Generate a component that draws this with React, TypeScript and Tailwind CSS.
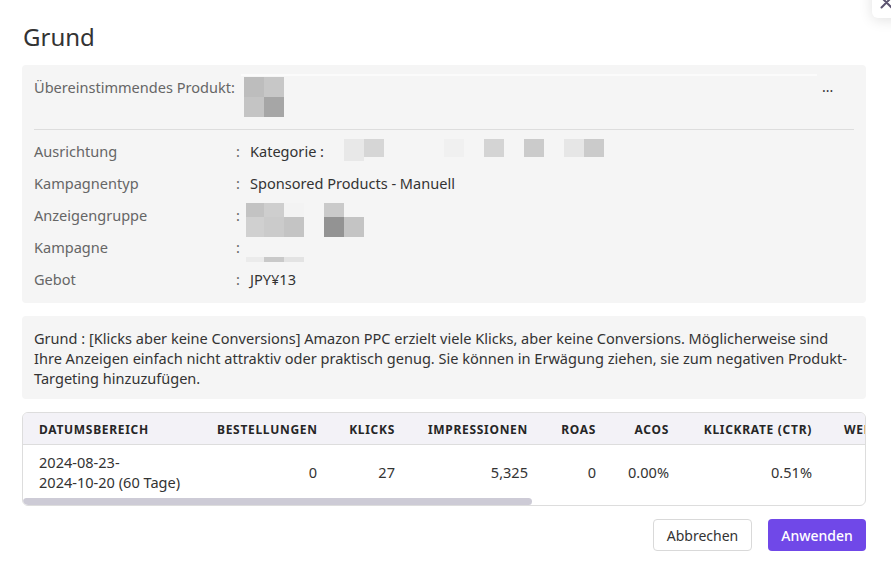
import React from "react";

const cols = [
  { label: "Datumsbereich", w: "w-[178px]", align: "text-left" },
  { label: "Bestellungen", w: "w-[132px]", align: "text-right" },
  { label: "Klicks", w: "w-[78px]", align: "text-right" },
  { label: "Impressionen", w: "w-[133px]", align: "text-right" },
  { label: "ROAS", w: "w-[68px]", align: "text-right" },
  { label: "ACOS", w: "w-[73px]", align: "text-right" },
  { label: "Klickrate (CTR)", w: "w-[143px]", align: "text-right" },
  { label: "Werbeausgaben", w: "w-[150px]", align: "text-left" },
  { label: "Umsatz", w: "w-[120px]", align: "text-right" },
];

function Px({ c, w = "w-[20px]", h = "h-[20px]" }: { c: string; w?: string; h?: string }) {
  return <div className={`${w} ${h} ${c} shrink-0`} />;
}

export default function App() {
  return (
    <div className="relative w-[891px] h-[578px] overflow-hidden bg-white pl-[22px] pr-[25px] pt-[21px] font-['Noto_Sans','Noto_Sans_CJK_SC',sans-serif]">
      {/* close button */}
      <div className="absolute left-[872px] top-[-22px] w-[40px] h-[40px] rounded-[6px] bg-white shadow-[0_2px_14px_rgba(0,0,0,0.12)]">
        <svg className="absolute left-[8px] top-[18px]" width="13" height="13" viewBox="0 0 13 13">
          <path d="M1.5 1.5 L11.5 11.5 M11.5 1.5 L1.5 11.5" stroke="#5c5470" strokeWidth="2" strokeLinecap="round" />
        </svg>
      </div>

      <h1 className="ml-[1px] mb-[12px] text-[24px] leading-[32px] text-[#333]">Grund</h1>

      {/* info box */}
      <div className="rounded-[4px] bg-[#f5f5f5] px-[12px] pt-[9px] pb-[8px] text-[14.55px] leading-[20px]">
        <div className="flex items-start">
          <div className="w-[207px] mt-[3px] text-[#666] whitespace-nowrap">Übereinstimmendes Produkt:</div>
          <div className="w-[581px] flex flex-col">
            <div className="h-[2px] w-[576px] bg-[#fbfbfb]" />
            <div className="ml-[3px] mt-[1px] flex flex-col">
              <div className="flex">
                <Px c="bg-[#bdbdbd]" />
                <Px c="bg-[#c7c7c7]" />
              </div>
              <div className="flex">
                <Px c="bg-[#c4c4c4]" />
                <Px c="bg-[#a6a6a6]" />
              </div>
            </div>
          </div>
          <div className="mt-[3px] text-[14px] text-[#333]">...</div>
        </div>
        <div className="mt-[12px] h-px bg-[#dddddd]" />
        <div className="mt-[5px]">
          <div className="flex h-[32px] items-center">
            <div className="w-[202px] text-[#666]">Ausrichtung</div>
            <div className="w-[14px] text-[#666]">:</div>
            <div className="w-[94px] text-[#333] whitespace-nowrap">Kategorie :</div>
            <div className="flex items-start mt-[-2px] h-[22px]">
              <Px c="bg-[#e8e8e8]" h="h-[22px]" />
              <Px c="bg-[#d6d6d6]" h="h-[18px]" />
              <div className="w-[60px]" />
              <Px c="bg-[#f0f0f0]" h="h-[18px]" />
              <div className="w-[20px]" />
              <Px c="bg-[#d4d4d4]" h="h-[18px]" />
              <div className="w-[20px]" />
              <Px c="bg-[#cbcbcb]" h="h-[18px]" />
              <div className="w-[20px]" />
              <Px c="bg-[#e6e6e6]" h="h-[18px]" />
              <Px c="bg-[#cbcbcb]" h="h-[18px]" />
            </div>
          </div>
          <div className="flex h-[32px] items-center">
            <div className="w-[202px] text-[#666]">Kampagnentyp</div>
            <div className="w-[14px] text-[#666]">:</div>
            <div className="text-[#333]">Sponsored Products - Manuell</div>
          </div>
          <div className="flex h-[32px] items-center">
            <div className="w-[202px] text-[#666]">Anzeigengruppe</div>
            <div className="w-[14px] text-[#666]">:</div>
            <div className="ml-[-4px] mt-[10px] flex items-start h-[34px]">
              <div className="flex flex-col">
                <div className="flex">
                  <Px c="bg-[#c3c3c3]" w="w-[18px]" h="h-[14px]" />
                  <Px c="bg-[#cecece]" h="h-[14px]" />
                  <Px c="bg-[#f3f3f3]" h="h-[14px]" />
                </div>
                <div className="flex">
                  <Px c="bg-[#d0d0d0]" w="w-[18px]" />
                  <Px c="bg-[#cbcbcb]" />
                  <Px c="bg-[#c4c4c4]" />
                </div>
              </div>
              <div className="ml-[20px] flex flex-col">
                <div className="flex">
                  <Px c="bg-[#cacaca]" h="h-[14px]" />
                </div>
                <div className="flex">
                  <Px c="bg-[#939393]" />
                  <Px c="bg-[#c4c4c4]" />
                </div>
              </div>
            </div>
          </div>
          <div className="flex h-[32px] items-center">
            <div className="w-[202px] text-[#666]">Kampagne</div>
            <div className="w-[14px] text-[#666]">:</div>
            <div className="ml-[-4px] mt-[25px] flex h-[5px]">
              <Px c="bg-[#ebebeb]" w="w-[18px]" h="h-[5px]" />
              <Px c="bg-[#c9c9c9]" h="h-[5px]" />
              <Px c="bg-[#e3e3e3]" h="h-[5px]" />
            </div>
          </div>
          <div className="flex h-[32px] items-center">
            <div className="w-[202px] text-[#666]">Gebot</div>
            <div className="w-[14px] text-[#666]">:</div>
            <div className="text-[#333]">JPY¥13</div>
          </div>
        </div>
      </div>

      {/* reason box */}
      <div className="mt-[13px] rounded-[4px] bg-[#f5f5f5] px-[12px] pt-[12px] pb-[11px] text-[14.55px] leading-[20px] text-[#333]">
        Grund : [Klicks aber keine Conversions] Amazon PPC erzielt viele Klicks, aber keine Conversions. Möglicherweise sind Ihre Anzeigen einfach nicht attraktiv oder praktisch genug. Sie können in Erwägung ziehen, sie zum negativen Produkt-Targeting hinzuzufügen.
      </div>

      {/* table */}
      <div className="mt-[13px] rounded-[6px] border border-[#dddddd] overflow-hidden">
        <div className="overflow-hidden">
          <div className="w-max">
            <div className="flex h-[32px] items-center bg-[#f3f2f7] border-b border-[#dddddd] pt-[2px]">
              {cols.map((c) => (
                <div
                  key={c.label}
                  className={`${c.w} ${c.align} shrink-0 px-[16px] text-[12px] font-bold uppercase tracking-[0.7px] text-[#262626] whitespace-nowrap`}
                >
                  {c.label}
                </div>
              ))}
            </div>
            <div className="flex h-[53px] items-center text-[14.55px] leading-[20px] text-[#333]">
              <div className="w-[178px] shrink-0 px-[16px] pt-[1px]">
                <div>2024-08-23-</div>
                <div className="whitespace-nowrap">2024-10-20 (60 Tage)</div>
              </div>
              <div className="w-[132px] shrink-0 px-[16px] text-right">0</div>
              <div className="w-[78px] shrink-0 px-[16px] text-right">27</div>
              <div className="w-[133px] shrink-0 px-[16px] text-right">5,325</div>
              <div className="w-[68px] shrink-0 px-[16px] text-right">0</div>
              <div className="w-[73px] shrink-0 px-[16px] text-right">0.00%</div>
              <div className="w-[143px] shrink-0 px-[16px] text-right">0.51%</div>
              <div className="w-[150px] shrink-0 px-[16px] text-right">JPY¥0</div>
              <div className="w-[120px] shrink-0 px-[16px] text-right">JPY¥0</div>
            </div>
          </div>
        </div>
        <div className="h-[7px]">
          <div className="h-[7px] w-[509px] rounded-full bg-[#cdcbd6]" />
        </div>
      </div>

      {/* buttons */}
      <div className="mt-[13px] flex justify-end gap-[16px] text-[14px]">
        <button className="w-[99px] h-[32px] rounded-[4px] border border-[#d9d9d9] bg-white text-[#333]">
          Abbrechen
        </button>
        <button className="w-[98px] h-[32px] rounded-[4px] bg-[#7048e8] font-medium text-white">
          Anwenden
        </button>
      </div>
    </div>
  );
}
